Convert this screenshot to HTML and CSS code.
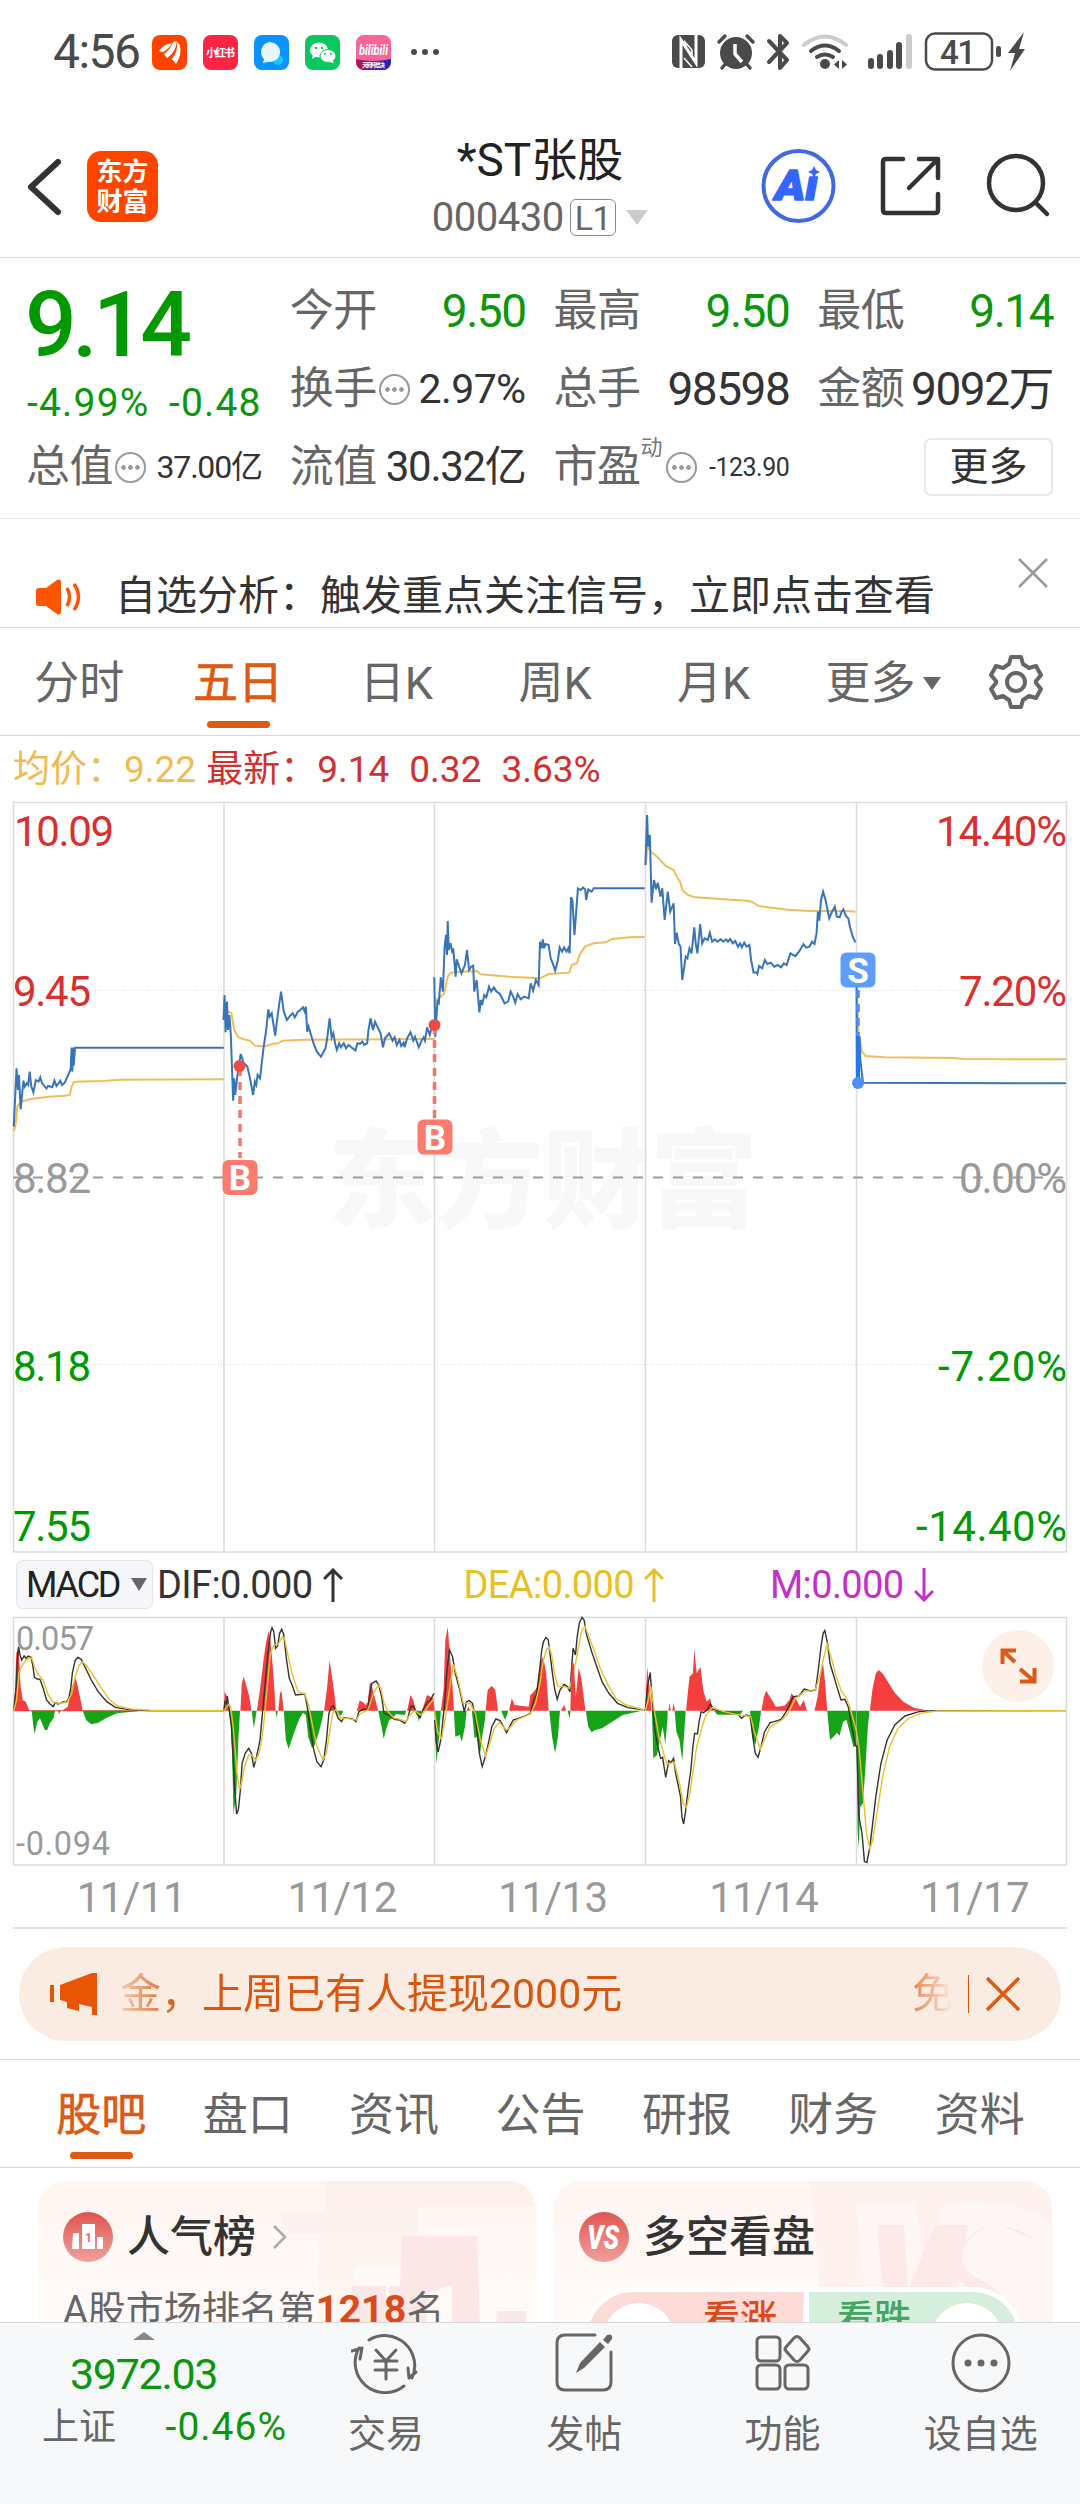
FILE: index.html
```html
<!DOCTYPE html>
<html lang="zh-CN">
<head>
    <meta charset="UTF-8">
    <title>*ST张股 000430</title>
    <link rel="stylesheet" href="styles.css">
</head>
<body>
    <div class="status-bar">
        <span class="clock">4:56</span>
        <div class="apps">
            <svg width="35" height="35" viewBox="0 0 35 35"><rect width="35" height="35" rx="8" fill="#ff4400"/><path d="M7 16Q12 9 20 8Q18 13 11 17ZM12 19Q19 14 21 7L25 6Q24 17 15 23ZM20 24Q26 17 25 7L28 10Q30 20 24 29Z" fill="#fff"/></svg>
            <svg width="35" height="35" viewBox="0 0 35 35"><rect width="35" height="35" rx="8" fill="#ff2442"/><text x="3" y="22" font-size="11" font-weight="700" fill="#fff" textLength="29">小红书</text></svg>
            <svg width="35" height="35" viewBox="0 0 35 35"><rect width="35" height="35" rx="8" fill="#0b93ff"/><circle cx="24" cy="25" r="5" fill="#19c8ff"/><path d="M16 7a11 10 0 1 1-2 20l-5 1 1-4A10 10 0 0 1 16 7Z" fill="#e9f6ff"/></svg>
            <svg width="35" height="35" viewBox="0 0 35 35"><rect width="35" height="35" rx="8" fill="#07c95f"/><ellipse cx="14" cy="15" rx="9" ry="7.5" fill="#fff"/><path d="M8 19l-1 5 5-3z" fill="#fff"/><ellipse cx="23" cy="21" rx="8" ry="6.5" fill="#fff" stroke="#07c95f"/><path d="M27 25l2 3-5-1z" fill="#fff"/><g fill="#07c95f"><circle cx="11" cy="13" r="1.2"/><circle cx="17" cy="13" r="1.2"/><circle cx="20" cy="19" r="1"/><circle cx="26" cy="19" r="1"/></g></svg>
            <svg width="35" height="35" viewBox="0 0 35 35"><defs><clipPath id="bl"><rect width="35" height="35" rx="8"/></clipPath><linearGradient id="blg"><stop stop-color="#c4104c"/><stop offset="1" stop-color="#0a28c8"/></linearGradient></defs><g clip-path="url(#bl)"><rect width="35" height="35" fill="#fb6496"/><path d="M0 24Q17 28 35 24V35H0Z" fill="url(#blg)"/><text x="3" y="20" font-size="14" font-style="italic" font-weight="700" fill="#fff" textLength="29" lengthAdjust="spacingAndGlyphs">bilibili</text><text x="6" y="32" font-size="6" font-weight="700" fill="#fff" textLength="23">天府杯总决</text></g></svg>
        </div>
        <svg class="dots" width="28" height="6" viewBox="0 0 28 6" fill="#4a4a4a"><circle cx="3" cy="3" r="3"/><circle cx="14" cy="3" r="3"/><circle cx="25" cy="3" r="3"/></svg>
        <svg class="system" width="360" height="44" viewBox="670 30 360 44" fill="#4a4a4a">
            <rect x="672" y="35" width="33" height="33" rx="6"/>
            <path d="M681 68V40L696 63V35" fill="none" stroke="#fff" stroke-width="3"/><path d="M685 42L692 50V54L686 48ZM684 58L692 67" fill="none" stroke="#fff" stroke-width="1.5"/>
            <circle cx="736" cy="53" r="16"/><path d="M719 42l6-6M753 42l-6-6M722 68l5-6M750 68l-5-6" stroke="#4a4a4a" stroke-width="3.5" stroke-linecap="round"/><path d="M735 44v10l7 8" fill="none" stroke="#fff" stroke-width="3.5"/>
            <path d="M769 41L787 60L780 68V36L787 43L769 62" fill="none" stroke="#4a4a4a" stroke-width="4" stroke-linejoin="round" stroke-linecap="round"/>
            <path d="M804 45Q825 28 846 45" fill="none" stroke="#ccc" stroke-width="4" stroke-linecap="round"/>
            <path d="M811 51Q825 40 839 51M817 57Q825 52 833 57" fill="none" stroke="#4a4a4a" stroke-width="4" stroke-linecap="round"/>
            <circle cx="825" cy="64" r="5"/><path d="M839 60v9l-5-4.5zM842 60v9l5-4.5z"/>
            <rect x="868" y="58" width="6" height="11" rx="3"/><rect x="877" y="54" width="6" height="15" rx="3"/><rect x="887" y="50" width="6" height="19" rx="3"/><rect x="896" y="42" width="6" height="27" rx="3"/><rect x="906" y="34" width="6" height="35" rx="3" fill="#ccc"/>
            <rect x="926" y="33.500" width="66" height="36" rx="9" fill="none" stroke="#4a4a4a" stroke-width="2.500"/>
            <text x="940" y="64" font-size="33" font-weight="500" textLength="36">41</text>
            <rect x="996" y="46" width="5" height="11" rx="2.500"/><path d="M1024 32L1008 53h7l-5 18 15-22h-6z"/>
        </svg>
    </div>

    <div class="header">
        <svg width="36" height="60" viewBox="26 157 36 60" fill="none" stroke="#333" stroke-width="6" stroke-linecap="round" stroke-linejoin="round"><path d="M58 162L31 187L58 212"/></svg>
        <div class="logo">东方<br>财富</div>
        <div class="stock">
            <div class="stock-name">*ST张股</div>
            <div class="stock-code">000430<span class="level">L1</span><i class="caret"></i></div>
        </div>
        <svg class="header-icons" width="300" height="76" viewBox="760 150 300 76" fill="none" stroke="#333" stroke-width="4.500" stroke-linecap="round" stroke-linejoin="round">
            <circle cx="798.500" cy="187" r="35" stroke="#4169e1" stroke-width="4"/>
            <text x="775" y="201" font-size="43" font-weight="900" font-style="italic" fill="#3366ff" stroke="#3366ff" stroke-width="1.500" textLength="43" lengthAdjust="spacingAndGlyphs">Aı</text>
            <path d="M814 167l2 4 4 2-4 2-2 4-2-4-4-2 4-2z" fill="#3366ff" stroke="none"/>
            <path d="M903 160H886Q883 160 883 163V211Q883 214 886 214H935Q938 214 938 211V195M919 160H938V179M937 161L909 189"/>
            <circle cx="1016" cy="184" r="27"/><path d="M1036 204L1047 215"/>
        </svg>
    </div>

    <div class="quote">
        <div class="col">
            <div class="price">9.14</div>
            <div class="change"><span>-4.99%</span><span>-0.48</span></div>
            <div class="row"><label>总值</label><i class="info"></i><span class="v32">37.00亿</span></div>
        </div>
        <div class="col">
            <div class="row"><label>今开</label><span class="green">9.50</span></div>
            <div class="row"><label>换手</label><i class="info"></i><span class="v41">2.97%</span></div>
            <div class="row"><label>流值</label><span class="v42">30.32亿</span></div>
        </div>
        <div class="col">
            <div class="row"><label>最高</label><span class="green">9.50</span></div>
            <div class="row"><label>总手</label><span>98598</span></div>
            <div class="row"><label>市盈</label><sup>动</sup><i class="info"></i><span class="v25">-123.90</span></div>
        </div>
        <div class="col">
            <div class="row"><label>最低</label><span class="green">9.14</span></div>
            <div class="row"><label>金额</label><span>9092万</span></div>
            <div class="row"><button class="more">更多</button></div>
        </div>
    </div>

    <div class="notice">
        <svg width="48" height="38" viewBox="0 0 48 38"><path d="M4 10H11L22 2Q26 0 26 5V33Q26 38 22 36L11 28H4Q1 28 1 25V13Q1 10 4 10Z" fill="#ff5500"/><path d="M32 10Q37 19 32 28M39 6Q48 19 39 32" fill="none" stroke="#ff5500" stroke-width="3.500"/></svg>
        <span>自选分析：触发重点关注信号，立即点击查看</span>
        <svg class="close" width="32" height="30" viewBox="0 0 32 30"><path d="M2 1L30 29M30 1L2 29" stroke="#999" stroke-width="2.500"/></svg>
    </div>

    <div class="periods">
        <span>分时</span><span class="active">五日</span><span>日K</span><span>周K</span><span>月K</span><span class="wide">更多<i></i></span>
        <svg width="54" height="54" viewBox="0 0 54 54" fill="none" stroke="#666" stroke-width="4" stroke-linejoin="round"><path d="M22 2H32L34 9L40 13L47 11L52 20L47 26V28L52 34L47 43L40 41L34 45L32 52H22L20 45L14 41L7 43L2 34L7 28V26L2 20L7 11L14 13L20 9Z"/><circle cx="27" cy="27" r="9"/></svg>
    </div>

    <div class="averages">
        <span class="avg">均价：</span><span class="avg num">9.22</span>
        <span>最新：</span><span class="num">9.14</span><span class="num">0.32</span><span>3.63%</span>
    </div>

    <svg class="chart" width="1080" height="752" viewBox="0 801 1080 752">
        <text class="watermark" x="328" y="1219" textLength="430">东方财富</text>
        <path class="grid" d="M13 802.500H1067M13 1552H1067M13.500 802V1552M1066.500 802V1552" stroke-width="2"/>
        <path class="grid" d="M224 803V1552M434.500 803V1552M645.500 803V1552M856.500 803V1552"/>
        <path class="dotted" d="M14 990.500H1066M14 1364.500H1066"/>
        <path d="M13 1177.500H1067" stroke="#999" stroke-width="2" stroke-dasharray="10 10"/>

        <g class="lines" transform="translate(0 800) scale(.3444 .3333)">
            <g stroke="#f0bd5c">
                <polyline points="40,995 46,970 50,920 62,905 90,897 140,890 190,887 203,884 208,860 215,845 300,843 350,839 650,838"/>
                <polyline points="655,640 665,635 672,640 680,690 690,710 705,717 725,722 740,737 770,739 790,732 808,730 820,722 880,719 1262,717"/>
                <polyline points="1266,600 1280,590 1290,580 1300,530 1308,518 1340,515 1385,513 1395,523 1480,530 1568,535 1593,522 1653,518 1660,495 1675,490 1683,465 1698,440 1723,430 1758,427 1778,417 1828,412 1872,411"/>
            </g>
            <g stroke="#3a74b8">
                <polyline points="40,980 48,805 52,870 55,825 60,928 68,842 72,860 78,850 82,855 86,815 91,860 97,877 104,840 112,845 117,832 122,850 135,865 140,858 152,862 158,842 164,858 170,850 175,842 180,855 188,848 192,838 198,825 205,808 208,743 210,815 212,743 214,797 218,743 650,743"/>
                <polyline points="649,660 652,585 655,697 659,605 662,690 666,645 670,700 677,902 680,835 683,885 690,820 699,762 708,790 718,800 725,830 735,885 740,845 744,855 748,825 755,835 765,745 773,690 779,628 783,650 789,640 799,707 807,640 816,575 824,635 833,660 842,648 850,640 856,652 865,635 872,630 880,622 885,635 888,620 892,695 896,680 903,705 912,735 920,755 932,770 945,745 950,715 957,655 963,712 968,700 973,730 978,750 985,730 990,742 998,730 1005,745 1012,735 1020,742 1032,752 1038,730 1045,732 1052,725 1058,735 1066,730 1070,690 1076,655 1083,690 1089,665 1098,685 1105,700 1112,742 1118,715 1130,700 1140,722 1146,712 1152,735 1160,720 1165,738 1172,728 1175,742 1182,715 1192,697 1200,722 1205,710 1216,742 1225,720 1230,712 1234,722 1240,682 1248,705 1255,675 1260,690"/>
                <polyline points="1261,532 1264,710 1270,605 1274,610 1280,532 1286,575 1291,440 1295,405 1298,465 1300,363 1303,450 1308,430 1314,460 1316,445 1323,530 1326,478 1333,500 1340,520 1350,495 1356,450 1362,510 1368,500 1374,497 1377,575 1384,540 1392,637 1396,600 1400,615 1406,585 1412,592 1420,560 1426,575 1434,562 1442,575 1450,580 1458,595 1465,610 1475,605 1483,575 1490,590 1496,608 1503,582 1512,598 1522,590 1535,595 1541,550 1548,572 1556,540 1564,555 1568,425 1573,445 1576,418 1580,445 1584,432 1593,435 1599,475 1605,490 1612,512 1620,480 1625,442 1632,455 1638,442 1645,455 1650,445 1654,460 1658,292 1662,300 1668,405 1678,265 1686,270 1693,263 1699,268 1702,300 1708,268 1718,275 1724,265 1872,265"/>
            </g>
        </g>
        <g class="lines" transform="translate(540 800) scale(.3444 .3333)">
            <g stroke="#f0bd5c">
                <polyline points="307,195 313,140 322,155 340,170 365,198 388,210 400,235 408,248 413,270 430,285 450,292 600,302 615,305 635,318 720,329 780,333 890,333 916,335"/>
                <polyline points="920,560 925,700 935,755 945,768 1000,772 1200,774 1230,777 1527,778"/>
            </g>
            <g stroke="#3a74b8">
                <polyline points="306,195 311,45 314,140 319,105 324,308 331,240 337,268 342,248 350,290 355,265 362,360 371,275 378,335 388,310 392,432 397,398 403,432 408,440 413,540 419,500 423,470 428,475 434,445 440,460 448,382 452,430 457,460 465,372 471,430 478,415 487,420 493,398 500,425 508,418 515,425 525,418 532,425 540,418 546,425 552,417 560,430 567,423 575,440 581,430 586,442 593,428 600,440 608,435 613,480 620,518 628,517 631,522 636,498 645,505 653,480 660,492 670,488 680,500 690,495 700,502 708,490 716,495 727,460 735,465 742,468 752,455 765,433 773,443 782,440 790,425 797,432 803,400 807,335 811,362 816,300 822,275 829,300 840,355 848,335 856,320 862,350 870,352 876,335 881,328 888,348 895,355 900,380 908,410 916,427"/>
                <polyline points="919,530 920,845 928,710 930,780 938,848 1527,850"/>
            </g>
        </g>

        <!-- buy / sell marks -->
        <g stroke="#f4776b" stroke-width="3.500" stroke-dasharray="8 6">
            <path d="M240 1068V1158"/><path d="M434.500 1026V1120"/>
        </g>
        <circle cx="239.500" cy="1066" r="6" fill="#ee4b45"/><circle cx="434.500" cy="1025" r="6" fill="#ee4b45"/>
        <path d="M858 990V1050" stroke="#4a90f5" stroke-width="3.500" stroke-dasharray="8 6"/><path d="M858 1036V1083" stroke="#2478ea" stroke-width="4"/>
        <circle cx="858" cy="1083" r="6" fill="#4a90f5"/>
        <g class="mark">
            <rect x="222.500" y="1160" width="35" height="35" rx="6" fill="#fb7c6e"/><text x="240" y="1190">B</text>
            <rect x="417.500" y="1119.500" width="35" height="35" rx="6" fill="#fb7c6e"/><text x="435" y="1149.500">B</text>
            <rect x="840.500" y="952.500" width="35" height="35" rx="6" fill="#5f9dfa"/><text x="858" y="982.500">S</text>
        </g>

        <g class="axis">
            <g fill="#d92f2d"><text x="14" y="846" textLength="100">10.09</text><text x="13" y="1005.500" textLength="78">9.45</text></g>
            <text x="13" y="1192.500" fill="#999" textLength="78">8.82</text>
            <g fill="#009900"><text x="13" y="1381" textLength="78">8.18</text><text x="13" y="1541" textLength="78">7.55</text></g>
        </g>
        <g class="axis right">
            <g fill="#d92f2d"><text x="1067" y="846" textLength="131">14.40%</text><text x="1067" y="1005.500" textLength="108">7.20%</text></g>
            <text x="1067" y="1192.500" fill="#999" textLength="108">0.00%</text>
            <g fill="#009900"><text x="1067" y="1381" textLength="129">-7.20%</text><text x="1067" y="1541" textLength="151">-14.40%</text></g>
        </g>
    </svg>

    <div class="macd-bar">
        <div class="chip">MACD<i></i></div>
        <span class="dif">DIF:0.000<svg width="20" height="34" viewBox="0 0 20 34"><path d="M10 34V2M1 11L10 2L19 11"/></svg></span>
        <span class="dea">DEA:0.000<svg width="20" height="34" viewBox="0 0 20 34"><path d="M10 34V2M1 11L10 2L19 11"/></svg></span>
        <span class="m">M:0.000<svg width="20" height="34" viewBox="0 0 20 34"><path d="M10 0V32M1 23L10 32L19 23"/></svg></span>
    </div>

    <svg class="macd" width="1080" height="250" viewBox="0 1616 1080 250">
        <path class="grid" d="M13 1617.500H1067M224 1617V1865M434.500 1617V1865M645.500 1617V1865M856.500 1617V1865"/>
        <path class="grid" d="M13.500 1617V1865H1066.500V1617" stroke-width="2"/>
        <g transform="translate(0 1540) scale(.3444 .3333)">
            <path fill="#f43f3f" d="M38 511H650V514H38ZM40 512L44 450L47 340L54 322L60 440L66 480L76 487L82 505L86 512ZM180 512L190 505L197 500L205 460L212 430L220 415L226 440L234 480L240 512ZM650 512L652 455L660 470L668 512ZM698 512L702 430L708 410L716 440L724 470L730 512ZM746 512L756 440L764 370L772 310L780 273L786 310L792 380L798 470L800 512ZM808 512L813 460L817 452L821 485L824 512ZM941 512L950 440L957 360L964 410L972 470L976 512ZM1036 512L1044 482L1052 485L1062 495L1068 485L1074 425L1080 440L1090 480L1098 512ZM1182 512L1192 465L1200 480L1206 505L1210 512ZM1225 512L1240 465L1258 475L1262 512ZM1280 512L1288 450L1293 300L1300 260L1306 340L1314 440L1318 512ZM1355 512L1360 500L1366 512ZM1410 512L1416 450L1428 437L1438 450L1446 512ZM1478 512L1486 475L1494 495L1535 500L1540 465L1550 455L1560 440L1568 370L1577 350L1586 400L1593 512Z"/>
            <path fill="#17a317" d="M92 512L97 560L101 582L108 545L116 535L130 570L137 570L145 550L155 535L160 512ZM168 512L172 523L175 512ZM240 512L250 540L265 553L285 548L310 533L340 520L400 514V512ZM668 512L674 640L678 822L686 765L692 600L697 512ZM731 512L737 565L744 520L746 512ZM800 512L803 533L807 512ZM824 512L830 600L838 627L850 590L862 555L870 535L880 518L888 525L895 590L905 622L912 620L925 580L935 540L940 512ZM976 512L984 527L992 525L996 512ZM1098 512L1108 560L1114 597L1122 565L1130 540L1140 535L1150 522L1175 525L1180 512ZM1210 512L1216 545L1224 512ZM1262 512L1267 672L1276 580L1280 512ZM1318 512L1322 590L1335 585L1341 605L1350 560L1355 512ZM1370 512L1378 595L1385 590L1393 650L1400 590L1408 540L1410 512ZM1455 512L1467 540L1476 512Z"/>
            <g class="thin">
                <polyline stroke="#333" points="40,508 47,440 50,370 54,320 58,345 63,360 70,348 76,355 82,348 90,352 95,375 100,412 108,417 116,418 124,440 135,480 145,492 155,500 160,488 168,492 176,490 184,485 192,487 200,475 206,440 210,400 218,362 226,352 236,358 250,388 265,420 285,455 310,485 335,502 370,508 430,512 650,512 653,485 657,490 660,468 664,500 672,560 680,720 687,822 692,810 698,750 703,670 712,640 722,625 730,640 737,682 745,650 755,600 762,520 770,430 778,340 786,275 790,263 795,275 800,325 806,318 812,280 818,268 824,285 832,360 840,415 850,440 858,465 885,462 892,500 900,560 910,625 920,665 932,680 940,660 948,600 955,520 962,502 968,497 975,515 982,535 992,545 998,533 1010,535 1022,536 1034,545 1042,515 1055,508 1068,508 1074,460 1080,430 1085,427 1092,423 1100,435 1108,470 1115,520 1130,525 1145,538 1160,540 1175,550 1183,538 1193,500 1200,498 1210,520 1220,533 1228,510 1240,488 1250,480 1260,460"/>
                <polyline stroke="#333" points="1262,540 1267,610 1272,636 1280,600 1290,500 1298,390 1305,330 1314,350 1322,400 1335,450 1348,515 1355,485 1362,482 1372,490 1382,545 1392,640 1400,680 1408,655 1418,610 1428,560 1440,537 1452,542 1462,560 1471,578 1480,560 1490,540 1505,535 1525,528 1540,520 1550,480 1558,462 1568,380 1573,330 1578,305 1585,292 1592,300 1598,350 1604,400 1611,450 1618,478 1626,450 1638,433 1648,440 1655,456 1660,380 1664,325 1671,345 1676,290 1682,250 1690,232 1696,240 1702,280 1718,335 1733,380 1748,425 1768,460 1793,490 1823,503 1872,510"/>
                <polyline stroke="#e8c22e" points="40,512 48,480 55,400 65,375 80,356 92,354 102,385 112,405 125,420 140,465 155,488 175,490 195,487 208,462 218,410 230,375 240,366 252,378 270,405 290,438 315,475 340,498 380,507 440,511 650,512 665,492 670,500 678,570 688,700 696,748 702,725 710,680 722,645 732,645 742,662 752,640 760,600 768,530 776,440 785,340 796,315 808,312 820,290 826,295 835,340 848,400 865,455 885,462 896,495 908,560 920,620 938,660 948,640 958,570 966,520 976,508 990,535 1010,536 1035,540 1045,522 1068,510 1078,480 1085,460 1098,435 1106,445 1115,490 1130,520 1145,535 1160,537 1178,545 1190,525 1205,512 1220,525 1230,518 1242,500 1260,475"/>
                <polyline stroke="#e8c22e" points="1262,515 1270,575 1282,598 1292,540 1302,470 1316,373 1328,410 1345,490 1365,490 1380,520 1395,600 1410,648 1422,610 1435,565 1450,547 1470,570 1482,562 1500,540 1540,522 1555,490 1568,430 1576,370 1586,330 1594,320 1602,345 1610,400 1620,440 1638,440 1654,445 1662,410 1672,365 1680,320 1688,275 1698,258 1708,285 1723,325 1743,385 1763,430 1788,475 1818,495 1872,510"/>
            </g>
        </g>
        <g transform="translate(540 1540) scale(.3444 .3333)">
            <path fill="#f43f3f" d="M60 512L70 495L76 512ZM88 512L92 370L98 370L104 470L112 385L120 415L128 480L132 512ZM306 512L311 380L318 440L324 512ZM373 512L376 490L380 512ZM384 512L388 488L392 512ZM424 512L434 410L444 400L448 328L455 400L466 380L474 450L484 485L494 475L500 505L503 512ZM643 512L650 470L657 452L670 475L685 500L710 497L724 480L730 460L742 475L755 500L766 480L775 512ZM797 512L806 470L815 400L822 370L828 430L834 512ZM958 512L965 450L975 400L984 390L996 402L1010 425L1030 458L1055 485L1085 503L1130 512Z"/>
            <path fill="#17a317" d="M27 512L35 590L44 640L52 590L58 512ZM80 512L86 535L89 512ZM133 512L140 560L150 577L160 570L180 565L205 548L240 525L290 514V512ZM325 512L329 655L340 645L348 600L356 560L364 612L370 540L371 512ZM391 512L396 575L405 600L413 662L420 560L423 512ZM505 512L515 524L580 524L590 512ZM610 512L616 590L625 615L636 560L642 512ZM834 512L842 600L852 590L862 578L870 587L880 545L890 540L900 580L910 620L918 618V512ZM919 512L922 865L925 928L930 800L938 790L945 680L952 560L957 512Z"/>
            <g class="thin">
                <polyline stroke="#333" points="306,510 312,440 320,398 326,480 332,560 340,610 350,655 356,652 365,712 374,662 380,668 388,655 394,700 402,740 408,770 412,830 417,852 422,820 430,750 438,690 444,620 449,580 457,582 462,545 468,515 475,518 485,510 495,492 503,508 530,515 555,518 575,522 585,535 598,525 610,528 618,590 625,640 633,652 642,620 652,575 668,548 680,545 700,538 715,515 722,500 735,470 752,468 767,447 785,453 800,450 808,390 816,320 822,280 827,272 835,310 842,370 852,405 862,440 874,480 885,478 895,500 905,560 916,617 920,620 926,830 935,880 942,965 949,968 958,920 966,850 975,770 990,670 1008,600 1030,555 1060,528 1100,515 1140,512 1527,512"/>
                <polyline stroke="#e8c22e" points="306,512 314,480 322,440 330,500 345,590 368,672 390,668 405,730 416,790 425,803 435,760 445,690 455,620 468,570 480,530 500,503 530,514 580,525 612,530 622,575 640,627 652,598 668,560 700,542 720,520 740,478 770,453 798,452 812,410 822,360 834,312 845,350 860,410 876,455 890,475 902,510 918,570 926,620 938,760 948,880 958,927 966,900 980,810 995,710 1015,620 1040,565 1070,535 1105,520 1150,513 1527,512"/>
            </g>
        </g>
        <g fill="#999" font-size="32.500"><text x="16" y="1650" textLength="78">0.057</text><text x="16" y="1855" textLength="94">-0.094</text></g>
        <circle cx="1018" cy="1666" r="36" fill="#fdf0e9"/>
        <path d="M1015 1662L1003 1651M1002.500 1664V1650.500H1016M1020 1669L1034 1681M1020 1681.500H1034.500V1668" fill="none" stroke="#dd5a14" stroke-width="4"/>
    </svg>

    <div class="dates"><span>11/11</span><span>11/12</span><span>11/13</span><span>11/14</span><span>11/17</span></div>

    <div class="banner">
        <svg width="48" height="42" viewBox="0 0 48 42" fill="#e85504"><path d="M0 12H4V29H0ZM10 12L42 0H47V42H42V34L29 31V38L17 35V29L10 27Z"/></svg>
        <div class="marquee"><span>金，上周已有人提现2000元</span><span>免</span></div>
        <i></i>
        <svg width="34" height="34" viewBox="0 0 34 34"><path d="M1 1L33 33M33 1L1 33" stroke="#e2580c" stroke-width="3.500"/></svg>
    </div>

    <div class="tabs">
        <span class="active">股吧</span><span>盘口</span><span>资讯</span><span>公告</span><span>研报</span><span>财务</span><span>资料</span>
    </div>

    <div class="cards">
        <div class="card">
            <svg class="card-bg" width="498" height="142" viewBox="38 2181 498 142"><defs><linearGradient id="pk" x2="0" y2="1"><stop stop-color="#fdefec"/><stop offset="1" stop-color="#fef8f5"/></linearGradient></defs><path d="M326 2181H536V2323H545L540 2207H419L413 2267H355L350 2323H319V2234H281V2213H325Z" fill="url(#pk)"/><path d="M402 2236H477L480 2323H452V2285L428 2293L426 2323H389V2286H400ZM352 2286H386V2323H348ZM496 2311H526V2323H497Z" fill="#fbe8e6"/></svg>
            <div class="card-title">
                <svg width="50" height="50" viewBox="0 0 50 50"><defs><linearGradient id="rd" x2="0" y2="1"><stop stop-color="#df5450"/><stop offset="1" stop-color="#f2a09d"/></linearGradient></defs><circle cx="25" cy="25" r="25" fill="url(#rd)"/><path d="M10 21H16V37H40V25H34V37H32V12H19V37H9Z" fill="#fff"/><text x="22" y="30" font-size="12" font-weight="700" fill="#df7370">1</text></svg>
                <b>人气榜</b>
                <svg width="14" height="24" viewBox="0 0 14 24" fill="none" stroke="#aaa" stroke-width="2.500"><path d="M1 1L12 12L1 23"/></svg>
            </div>
            <div class="rank">A股市场排名第<b>1218</b>名</div>
        </div>
        <div class="card">
            <svg class="card-bg" width="498" height="142" viewBox="554 2181 498 142"><path d="M810 2181H1052V2323H823Z" fill="#fef1ee"/><path d="M856 2204H915L925 2260L945 2204Q1010 2196 1052 2222V2323H868Z" fill="#fef6f4"/><path d="M877 2225H904L908 2290L935 2225H968L950 2323H886ZM1037 2241Q985 2205 962 2252C958 2284 1002 2275 1006 2310V2323H974Q975 2290 955 2276Q960 2225 1000 2225Z" fill="#fce9e8"/></svg>
            <div class="card-title">
                <svg width="50" height="50" viewBox="0 0 50 50"><circle cx="25" cy="25" r="25" fill="url(#rd)"/><text x="8" y="37" font-size="33" font-style="italic" font-weight="900" fill="#fff" textLength="32" lengthAdjust="spacingAndGlyphs">VS</text></svg>
                <b>多空看盘</b>
            </div>
            <div class="vote">
                <div class="up"><i></i>看涨</div>
                <div class="down">看跌<i></i></div>
            </div>
        </div>
    </div>

    <div class="bottom-bar">
        <div class="index">
            <i></i>
            <div class="index-value">3972.03</div>
            <div class="index-row"><span>上证</span><b>-0.46%</b></div>
        </div>
        <div class="item">
            <svg width="70" height="62" viewBox="0 0 70 62"><path d="M18 8A30 30 0 0 1 61 46M65 40L58 46L57 36M53 54A30 30 0 0 1 8 16M1 19L11 16L9 27"/><path d="M25 18L35 29L45 18M24 29H46M24 38H46M35 29V47"/></svg>
            <span>交易</span>
        </div>
        <div class="item">
            <svg width="60" height="62" viewBox="0 0 60 62"><path d="M41 3H11Q3 3 3 11V50Q3 58 11 58H49Q57 58 57 50V20"/><path d="M22 41L26 31L46 10L51 15L30 36ZM49 8L53 3Q59 1 58 7L54 12Z" fill="#666" stroke="none"/></svg>
            <span>发帖</span>
        </div>
        <div class="item">
            <svg width="56" height="62" viewBox="0 0 56 62"><rect x="2" y="5" width="23" height="24" rx="4"/><rect x="2" y="33" width="23" height="24" rx="4"/><rect x="30" y="33" width="23" height="24" rx="4"/><path d="M39 6Q42 3 45 6L53 15Q55 17 53 19L45 28Q42 31 39 28L31 19Q29 17 31 15Z"/></svg>
            <span>功能</span>
        </div>
        <div class="item">
            <svg width="60" height="62" viewBox="0 0 60 62"><circle cx="30" cy="31" r="28"/><g fill="#666" stroke="none"><circle cx="17" cy="31" r="3.500"/><circle cx="30" cy="31" r="3.500"/><circle cx="43" cy="31" r="3.500"/></g></svg>
            <span>设自选</span>
        </div>
    </div>
</body>
</html>
```

FILE: styles.css
```css
* { box-sizing: border-box; }
body { margin: 0; width: 1080px; height: 2504px; overflow: hidden; background: #fff; color: #333; font-family: Roboto, "Noto Sans CJK SC", sans-serif; line-height: 1; }
svg { display: block; flex: none; }
i, b { font-style: normal; }

.status-bar { display: flex; align-items: center; height: 104px; padding-left: 53px; color: #4a4a4a; }
.clock { width: 99px; font-size: 48px; letter-spacing: -1.5px; }
.apps { display: flex; gap: 16px; }
.dots { margin-left: 20px; }
.system { margin-left: 231px; }

.header { display: flex; align-items: center; height: 154px; padding: 12px 0 0 26px; border-bottom: 1px solid #d8d8d8; }
.logo { display: flex; align-items: center; justify-content: center; width: 71px; height: 71px; margin-left: 25px; border-radius: 14px; background: #ff4400; color: #fff; font-size: 26px; font-weight: 700; line-height: 30px; }
.stock { width: 384px; margin-left: 190px; text-align: center; }
.stock-name { height: 62px; font-size: 46px; line-height: 54px; color: #222; }
.stock-code { display: flex; align-items: center; justify-content: center; height: 46px; color: #666; font-size: 40px; letter-spacing: -.5px; }
.level { height: 37px; margin: 0 10px 0 6px; padding: 0 4px; border: 1px solid #888; border-radius: 6px; font-size: 34px; line-height: 36px; }
.caret { border: 11px solid transparent; border-top: 15px solid #ccc; border-bottom: 0; }
.header-icons { margin-left: 28px; }

.quote { display: flex; gap: 29px; height: 261px; padding: 14px 27px 12px; border-bottom: 1px solid #ececec; }
.col { width: 235px; }
.row { display: flex; align-items: center; height: 78px; white-space: nowrap; }
.row label { margin-left: -1px; color: #666; font-size: 44px; letter-spacing: -.5px; }
.row span { margin-left: auto; font-size: 46px; letter-spacing: -1.5px; }
.row .green { color: #0c960c; }
.row .v41 { font-size: 41px; letter-spacing: -.6px; }
.row .v42 { font-size: 42px; letter-spacing: -1.3px; }
.row .v32 { font-size: 32px; letter-spacing: -1.2px; }
.row .v25 { font-size: 25px; letter-spacing: -.5px; }
.row sup { align-self: flex-start; margin: 9px 1px 0 0; color: #777; font-size: 22px; }
.info { width: 31px; height: 31px; margin-left: 2px; border: 2px solid #999; border-radius: 50%; background: radial-gradient(circle, #999 2px, transparent 2.5px) center / 7px 7px no-repeat, radial-gradient(circle, #999 2px, transparent 2.5px) 3px center / 7px 7px no-repeat, radial-gradient(circle, #999 2px, transparent 2.5px) 17px center / 7px 7px no-repeat; }
.price { height: 102px; margin-left: -2px; color: #009900; font-size: 91px; font-weight: 500; line-height: 106px; letter-spacing: -4.5px; }
.change { display: flex; justify-content: space-between; height: 54px; color: #0c960c; font-size: 39px; line-height: 58px; letter-spacing: 1.2px; }
.more { width: 129px; height: 58px; margin-left: auto; padding: 0; border: 2px solid #e8e8e8; border-radius: 7px; background: #fff; color: #333; font: 39px/50px Roboto, "Noto Sans CJK SC", sans-serif; }

.notice { display: flex; align-items: center; height: 109px; padding: 47px 31px 0 35px; border-bottom: 1px solid #d8d8d8; font-size: 41px; white-space: nowrap; }
.notice span { margin-left: 32px; }
.notice .close { align-self: flex-start; margin: -8px 0 0 auto; }

.periods { display: flex; align-items: center; height: 108px; border-bottom: 1px solid #d8d8d8; color: #666; font-size: 45px; }
.periods span { display: flex; position: relative; align-items: center; justify-content: center; width: 158.6px; height: 108px; padding-top: 3px; }
.periods .wide { width: 181px; }
.periods .wide i { margin-left: 8px; border: 9px solid transparent; border-top: 13px solid #666; border-bottom: 0; }
.periods svg { margin-left: 15px; }
.periods .active, .tabs .active { color: #dd5a14; -webkit-text-stroke: .6px #dd5a14; }
.active::after { content: ""; position: absolute; left: 50%; bottom: 8px; width: 63px; height: 7px; margin-left: -31px; border-radius: 4px; background: #dd5a14; }

.averages { display: flex; align-items: center; height: 65px; padding: 2px 0 0 13px; color: #d0302e; font-size: 37px; white-space: nowrap; }
.averages .avg { color: #efbb52; }
.averages .num { margin-right: 20px; }
.averages .avg.num { margin-right: 10px; }

.grid { fill: none; stroke: #dcdcdc; stroke-width: 1.5; }
.dotted { stroke: #ddd; stroke-dasharray: 1 2; }
.lines polyline { fill: none; stroke-width: 2; vector-effect: non-scaling-stroke; }
.thin polyline { fill: none; stroke-width: 1.4; vector-effect: non-scaling-stroke; }
.watermark { fill: #f8f8f8; font-size: 108px; font-weight: 900; }
.axis { font-size: 42px; }
.axis.right { text-anchor: end; }
.mark { fill: #fff; font-size: 35px; font-weight: 700; text-anchor: middle; }

.macd-bar { display: flex; align-items: center; height: 63px; padding-left: 16px; font-size: 38px; }
.chip { display: flex; align-items: center; width: 137px; height: 49px; padding-left: 9px; border: 1px solid #e2e4e8; border-radius: 7px; background: #f6f7fa; color: #222; font-size: 36px; letter-spacing: -2.2px; }
.chip i { margin-left: 12px; border: 8px solid transparent; border-top: 13px solid #666; border-bottom: 0; }
.macd-bar span { display: flex; align-items: center; width: 306.5px; letter-spacing: -.6px; }
.macd-bar span svg { margin-left: 10px; fill: none; stroke: currentColor; stroke-width: 3; }
.macd-bar .dif { margin-left: 4px; }
.dea { color: #e9c024; }
.m { color: #c42fcc; }

.dates { display: flex; height: 63px; margin: 0 13px; border-bottom: 2px solid #e3e3e3; color: #999; font-size: 42px; line-height: 64px; letter-spacing: -.5px; }
.dates span { flex: 1; padding-left: 26px; text-align: center; }

.banner { display: flex; align-items: center; height: 94px; margin: 18px 19px; padding: 0 41px 0 31px; border-radius: 47px; background: #fbece3; color: #d9560f; font-size: 41px; white-space: nowrap; }
.marquee { display: flex; justify-content: space-between; width: 850px; margin-left: 5px; padding: 0 0 0 17px; line-height: 60px; -webkit-mask-image: linear-gradient(90deg, transparent, #000 75px, #000 790px, transparent 850px); }
.banner i { width: 1px; height: 38px; margin: 0 17px 0 15px; background: #d9560f; }

.tabs { display: flex; height: 109px; padding: 0 27px 0 28px; border-top: 1px solid #d8d8d8; border-bottom: 1px solid #d8d8d8; color: #666; font-size: 45px; line-height: 112px; }
.tabs span { flex: 1; position: relative; text-align: center; }

.cards { display: flex; gap: 18px; height: 154px; padding: 13px 28px 0 38px; overflow: hidden; }
.card { position: relative; width: 498px; height: 260px; padding: 31px 25px; border-radius: 28px; background: linear-gradient(#fff5f3, #fffaf7 100px); overflow: hidden; }
.card-bg { position: absolute; left: 0; top: 0; }
.card-title { display: flex; position: relative; align-items: center; height: 50px; color: #333; font-size: 43px; }
.card-title b { margin: 0 17px 0 14px; font-weight: 500; }
.rank { position: relative; margin-top: 28px; color: #666; font-size: 38px; white-space: nowrap; }
.rank b { color: #dc4a1c; font-size: 39.5px; }
.vote { display: flex; position: relative; gap: 5px; width: 440px; height: 100px; margin: 25px 0 0 4px; border: 5px solid #fff; border-radius: 50px; overflow: hidden; background: #fff; font-size: 37px; font-weight: 500; }
.up, .down { display: flex; flex: none; line-height: 56px; }
.up { width: 216px; background: #fddcd8; color: #dc4a1c; gap: 28px; padding-left: 15px; clip-path: polygon(0 0, 100% 0, calc(100% - 4px) 100%, 0 100%); }
.down { width: 209px; background: #d6efdc; color: #43a661; gap: 20px; padding-left: 28px; }
.vote i { flex: none; width: 72px; height: 72px; margin-top: 11px; border-radius: 50%; background: #fff; }

.bottom-bar { display: flex; height: 182px; border-top: 1px solid #d8d8d8; background: #f7f8fa; color: #666; font-size: 38px; }
.index { width: 287px; padding-top: 9px; }
.index i { display: block; width: 0; margin-left: 133px; border: 11px solid transparent; border-bottom: 8px solid #888; border-top: 0; }
.index-value { margin: 13px 0 0 70px; color: #0c960c; font-size: 43px; letter-spacing: -1.3px; }
.index-row { display: flex; justify-content: space-between; margin: 12px 0 0 42px; font-size: 37px; align-items: center; }
.index-row b { color: #0c960c; font-size: 39px; font-weight: 400; letter-spacing: 1px; }
.item { display: flex; flex: 1; flex-direction: column; align-items: center; padding-top: 9px; }
.item svg { fill: none; stroke: #666; stroke-width: 3; stroke-linejoin: round; stroke-linecap: round; }
.item span { margin-top: 21px; }
```
